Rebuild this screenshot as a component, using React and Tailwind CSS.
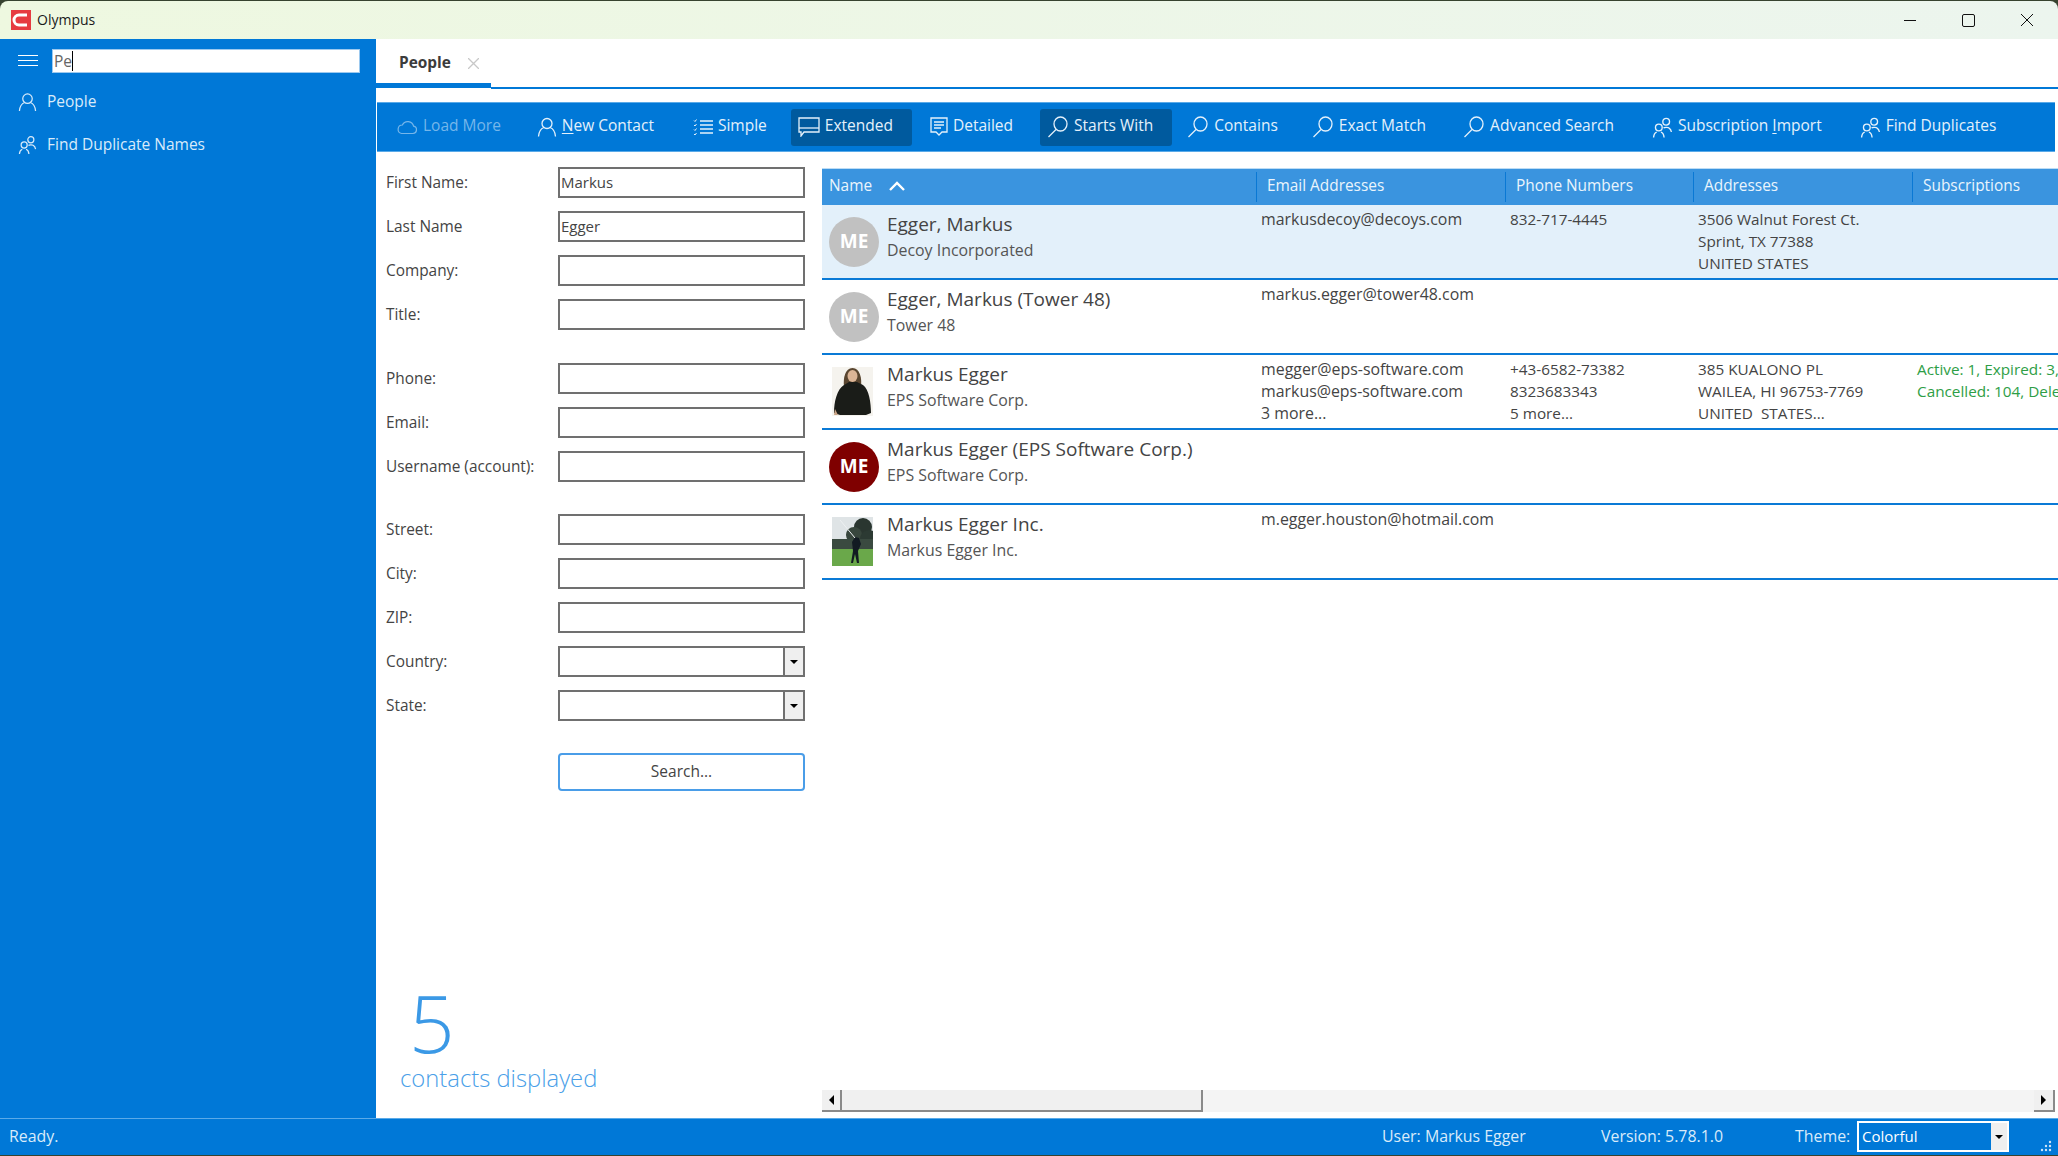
import React from "react";

const PersonIcon = ({ className }) => (
  <svg viewBox="0 0 20 20" fill="none" stroke="currentColor" strokeWidth="1.3" className={className}>
    <circle cx="10" cy="6.5" r="5" />
    <path d="M1.5 19.5c.4-5 3.2-8.2 5.5-9M18.5 19.5c-.4-5-3.2-8.2-5.5-9" />
  </svg>
);

const DuoIcon = ({ className }) => (
  <svg viewBox="0 0 20 20" fill="none" stroke="currentColor" strokeWidth="1.3" className={className}>
    <circle cx="13.5" cy="4.5" r="3.2" />
    <path d="M11 10.5c.8-.8 4-.9 5-.2 1.4.9 2.3 2.5 2.5 4" />
    <circle cx="6.5" cy="10" r="3.2" />
    <path d="M1.5 19.5c.2-2.3 1.2-4.4 3-5M11.5 19.5c-.2-2.3-1.2-4.4-3-5" />
  </svg>
);

const SearchIcon = ({ className }) => (
  <svg viewBox="0 0 22 22" fill="none" stroke="currentColor" strokeWidth="1.3" className={className}>
    <ellipse cx="13.5" cy="8" rx="6.5" ry="7" />
    <path d="M9 13.5 1.5 21" />
  </svg>
);

const CloudIcon = ({ className }) => (
  <svg viewBox="0 0 22 16" fill="none" stroke="currentColor" strokeWidth="1.2" className={className}>
    <path d="M5.5 14.5h11.5a3.7 3.7 0 0 0 .6-7.3A6 6 0 0 0 6.4 6 4.3 4.3 0 0 0 5.5 14.5Z" />
  </svg>
);

const ListIcon = ({ className }) => (
  <svg viewBox="0 0 20 18" fill="none" stroke="currentColor" strokeWidth="1.4" className={className}>
    <path d="M7 3h13M7 7h13M7 11h13M7 15h13" />
    <path d="M1 2.5l1 1 1.5-2M1 7l1 1 1.5-2M1 11.5l1 1 1.5-2M1 16l1 1 1.5-2" strokeWidth="1" />
  </svg>
);

const BubbleIcon = ({ className }) => (
  <svg viewBox="0 0 22 20" fill="none" stroke="currentColor" strokeWidth="1.3" className={className}>
    <path d="M1 1h20v14H6l-3 4v-4H1Z" />
    <path d="M1 11h20" />
  </svg>
);

const DocIcon = ({ className }) => (
  <svg viewBox="0 0 18 20" fill="none" stroke="currentColor" strokeWidth="1.3" className={className}>
    <path d="M1 1h16v14h-5l-3 3-3-3H1Z" />
    <path d="M4 5h10M4 8h10M4 11h7" />
  </svg>
);

const toolbar = [
  { icon: CloudIcon, size: "w-[22px] h-4", label: "Load More", disabled: true, space: "" },
  { icon: PersonIcon, size: "w-5 h-5", label: "New Contact", mark: 0, space: "ml-[10px]" },
  { icon: ListIcon, size: "w-5 h-[18px]", label: "Simple", space: "ml-[13px]" },
  { icon: BubbleIcon, size: "w-[22px] h-5", label: "Extended", active: true, space: "ml-[5px]" },
  { icon: DocIcon, size: "w-[18px] h-5", label: "Detailed", space: "ml-[11px]" },
  { icon: SearchIcon, size: "w-[22px] h-[22px]", label: "Starts With", active: true, space: "ml-[8px]" },
  { icon: SearchIcon, size: "w-[22px] h-[22px]", label: "Contains", space: "ml-[8px]" },
  { icon: SearchIcon, size: "w-[22px] h-[22px]", label: "Exact Match", space: "ml-[8px]" },
  { icon: SearchIcon, size: "w-[22px] h-[22px]", label: "Advanced Search", space: "ml-[11px]" },
  { icon: DuoIcon, size: "w-[21px] h-[21px]", label: "Subscription Import", mark: 13, space: "ml-[12px]" },
  { icon: DuoIcon, size: "w-[21px] h-[21px]", label: "Find Duplicates", space: "ml-[12px]" },
];

const WomanPhoto = () => (
  <svg viewBox="0 0 41 49" className="w-[41px] h-[49px]">
    <rect width="41" height="49" fill="#f5f3ee" />
    <path d="M12 20c-1-9 1-19 8.500-19S30 11 29 20Z" fill="#5a4630" />
    <ellipse cx="20.500" cy="9" rx="5" ry="6" fill="#dcb596" />
    <path d="M2 46C2 35 5 22 12 18l5-3h8l6 3c6 4 8 18 8 28l-5 2H8Z" fill="#1a1c18" />
    <path d="M2 48l1-6 3 6Z" fill="#caa487" />
  </svg>
);

const GolferPhoto = () => (
  <svg viewBox="0 0 41 49" className="w-[41px] h-[49px]">
    <rect width="41" height="49" fill="#dfe4e6" />
    <circle cx="31" cy="10" r="9" fill="#2a3630" />
    <circle cx="22" cy="18" r="8" fill="#38463d" />
    <circle cx="37" cy="22" r="9" fill="#2c3a33" />
    <rect y="22" width="41" height="11" fill="#3a4a40" />
    <rect y="32" width="41" height="17" fill="#6aa84a" />
    <path d="M19 46l2-12-1-9 3-5 4 1 2 6-3 7 1 12h-2l-2-9-2 9Z" fill="#121a22" />
    <path d="M23 21 8 3" stroke="#eef1f2" strokeWidth="1" />
  </svg>
);

const contacts = [
  {
    name: "Egger, Markus", company: "Decoy Incorporated", avatar: "grey", selected: true,
    emails: ["markusdecoy@decoys.com"], phones: ["832-717-4445"],
    addresses: ["3506 Walnut Forest Ct.", "Sprint, TX 77388", "UNITED STATES"],
  },
  {
    name: "Egger, Markus (Tower 48)", company: "Tower 48", avatar: "grey",
    emails: ["markus.egger@tower48.com"], phones: [], addresses: [],
  },
  {
    name: "Markus Egger", company: "EPS Software Corp.", avatar: "woman",
    emails: ["megger@eps-software.com", "markus@eps-software.com", "3 more..."],
    phones: ["+43-6582-73382", "8323683343", "5 more..."],
    addresses: ["385 KUALONO PL", "WAILEA, HI 96753-7769", "UNITED  STATES..."],
    subs: ["Active: 1, Expired: 3, Pending: 0", "Cancelled: 104, Deleted: 0"],
  },
  {
    name: "Markus Egger (EPS Software Corp.)", company: "EPS Software Corp.", avatar: "red",
    emails: [], phones: [], addresses: [],
  },
  {
    name: "Markus Egger Inc.", company: "Markus Egger Inc.", avatar: "golfer",
    emails: ["m.egger.houston@hotmail.com"], phones: [], addresses: [],
  },
];

const Avatar = ({ kind }) => {
  if (kind === "woman") return <div className="pl-[3px] w-[50px] shrink-0"><WomanPhoto /></div>;
  if (kind === "golfer") return <div className="pl-[3px] w-[50px] shrink-0"><GolferPhoto /></div>;
  return (
    <div
      className={`w-[50px] h-[50px] shrink-0 rounded-full flex items-center justify-center text-white font-bold text-[19px] ${
        kind === "red" ? "bg-[#7f0000]" : "bg-[#c1c1c1]"
      }`}
    >
      ME
    </div>
  );
};

const Cell = ({ lines, className = "text-[#444] text-[15.3px]" }) => (
  <div className={`pt-[3px] pl-[5px] leading-[22px] whitespace-pre overflow-hidden ${className}`}>
    {lines.map((l) => (
      <div key={l}>{l}</div>
    ))}
  </div>
);

const Field = ({ label, value, combo, className = "" }) => (
  <div className={`flex items-center h-[31px] ${className}`}>
    <label className="w-[172px] text-[15.4px] text-[#444]">{label}</label>
    {combo ? (
      <div className="w-[247px] h-[31px] border-2 border-[#707070] flex bg-white">
        <div className="flex-1" />
        <div className="w-[20px] bg-[#efefef] border-l-2 border-[#707070] flex items-center justify-center">
          <span className="w-0 h-0 border-x-[4px] border-x-transparent border-t-[4px] border-t-black" />
        </div>
      </div>
    ) : (
      <div className="w-[247px] h-[31px] border-2 border-[#707070] bg-white pl-px text-[15px] leading-[26px] text-[#444]">
        {value}
      </div>
    )}
  </div>
);

const Underlined = ({ text, mark }) =>
  mark === undefined ? (
    text
  ) : (
    <>
      {text.slice(0, mark)}
      <span className="underline underline-offset-2">{text[mark]}</span>
      {text.slice(mark + 1)}
    </>
  );

const App = () => {
  return (
    <div
      className="h-screen w-full bg-[#37432f] pt-px flex flex-col overflow-hidden text-[#444]"
      style={{ fontFamily: '"Open Sans", "Noto Sans", sans-serif' }}
    >
      {/* title bar */}
      <div className="h-[38px] shrink-0 rounded-tl-lg rounded-tr-lg bg-gradient-to-r from-[#eef8e0] to-[#ecf5ee] flex items-center pl-[11px]">
        <svg viewBox="0 0 20 20" className="w-5 h-5">
          <rect width="20" height="20" fill="#e63b41" />
          <path d="M16 5H8a5 5 0 0 0 0 10h8" fill="none" stroke="#fff" strokeWidth="3" />
        </svg>
        <span className="ml-[6px] pb-px text-[14px] text-[#1a1a1a]">Olympus</span>
        <div className="ml-auto flex items-center gap-[46px] pr-[25px] text-[#1a1a1a]">
          <span className="w-3 h-px bg-[#111]" />
          <span className="w-[13px] h-[13px] border border-[#111] rounded-[2px]" />
          <svg viewBox="0 0 12 12" className="w-3 h-3" stroke="#111" strokeWidth="1">
            <path d="M0 0l12 12M12 0 0 12" />
          </svg>
        </div>
      </div>

      <div className="flex-1 flex min-h-0 bg-white">
        {/* sidebar */}
        <div className="w-[376px] shrink-0 bg-[#0078d7] text-[#d9ebfa]">
          <div className="flex items-center h-[33px] mt-[5px] pl-[18px]">
            <div className="w-[20px] flex flex-col gap-[4px]">
              <span className="h-px bg-white" />
              <span className="h-px bg-white" />
              <span className="h-px bg-white" />
            </div>
            <div className="ml-[14px] w-[308px] h-[24px] bg-white border border-[#9cc9ef] pl-px text-[15.5px] leading-[22px] text-[#666] flex items-center">
              Pe<span className="w-px h-[20px] bg-black" />
            </div>
          </div>
          <div className="flex items-center gap-[10px] pl-[18px] mt-[10px] h-[30px] text-[15.5px]">
            <PersonIcon className="w-[19px] h-5" />
            People
          </div>
          <div className="flex items-center gap-[10px] pl-[18px] mt-[13px] h-[30px] text-[15.5px]">
            <DuoIcon className="w-[19px] h-5" />
            Find Duplicate Names
          </div>
        </div>

        {/* main */}
        <div className="flex-1 min-w-0 flex flex-col">
          <div className="h-[50px] shrink-0 flex">
            <div className="w-[115px] h-[49px] pt-[4px] border-b-[5px] border-[#0078d7] flex items-center pl-[23px]">
              <span className="text-[15.4px] font-bold text-[#3c3c3c]">People</span>
              <svg viewBox="0 0 11 11" className="w-[11px] h-[11px] ml-[17px]" stroke="#c8c8c8" strokeWidth="1.3">
                <path d="M0 0l11 11M11 0 0 11" />
              </svg>
            </div>
            <div className="flex-1 h-[50px] border-b-2 border-[#0078d7]" />
          </div>

          {/* toolbar */}
          <div className="mt-[13px] ml-px mr-[3px] h-[50px] shrink-0 bg-[#0078d7] border-y border-[#5aaae8] flex items-center pl-[12px] text-[#e4f1fb]">
            {toolbar.map(({ icon: Icon, size, label, disabled, active, mark, space }) => (
              <div
                key={label}
                className={`h-[37px] pl-[7px] pr-[19px] flex items-center gap-[5px] rounded-[3px] text-[15.5px] whitespace-nowrap ${space} ${
                  active ? "bg-[#005a9e]" : ""
                } ${disabled ? "text-[#75b6ea]" : ""}`}
              >
                <Icon className={size} />
                <span className="pb-[2px]">
                  <Underlined text={label} mark={mark} />
                </span>
              </div>
            ))}
          </div>

          <div className="flex-1 min-h-0 flex">
            {/* search form */}
            <div className="w-[446px] shrink-0 flex flex-col pl-[10px] pt-[15px]">
              <Field label="First Name:" value="Markus" />
              <Field label="Last Name" value="Egger" className="mt-[13px]" />
              <Field label="Company:" className="mt-[13px]" />
              <Field label="Title:" className="mt-[13px]" />
              <Field label="Phone:" className="mt-[33px]" />
              <Field label="Email:" className="mt-[13px]" />
              <Field label="Username (account):" className="mt-[13px]" />
              <Field label="Street:" className="mt-[32px]" />
              <Field label="City:" className="mt-[13px]" />
              <Field label="ZIP:" className="mt-[13px]" />
              <Field label="Country:" combo className="mt-[13px]" />
              <Field label="State:" combo className="mt-[13px]" />
              <button className="ml-[172px] mt-[32px] w-[247px] h-[38px] rounded-[4px] border-2 border-[#4a9de8] bg-white text-[15.5px] text-[#444]">
                Search...
              </button>
              <div className="mt-auto pl-[14px] pb-[24px] text-[#3b99e6] font-light">
                <div className="pl-[9px] text-[80px] leading-[80px]">5</div>
                <div className="text-[23.8px] leading-[32px] text-[#4aa0e8]">contacts displayed</div>
              </div>
            </div>

            {/* results */}
            <div className="flex-1 min-w-0 flex flex-col pt-[16px]">
              <div className="h-[37px] shrink-0 bg-[#3a94df] border-t border-[#bcdcf5] grid grid-cols-[434px_249px_188px_219px_146px] text-[15.4px] text-[#eaf4fc]">
                <div className="pl-[7px] pb-[2px] flex items-center gap-[17px] whitespace-nowrap">
                  Name
                  <svg viewBox="0 0 16 10" className="w-4 h-[10px]" fill="none" stroke="#fff" strokeWidth="2.4">
                    <path d="M1 9l7-7 7 7" />
                  </svg>
                </div>
                {["Email Addresses", "Phone Numbers", "Addresses", "Subscriptions"].map((h) => (
                  <div key={h} className="my-[3px] border-l border-[#0a78d4] pl-[10px] pb-[2px] flex items-center whitespace-nowrap overflow-hidden">
                    {h}
                  </div>
                ))}
              </div>

              <div className="flex-1 min-h-0">
                {contacts.map((c) => (
                  <div
                    key={c.name}
                    className={`h-[75px] border-b-2 border-[#0a7ad6] grid grid-cols-[434px_249px_188px_219px_146px] ${
                      c.selected ? "bg-[#e3f0fa]" : ""
                    }`}
                  >
                    <div className="flex items-center pl-[7px] gap-[8px] whitespace-nowrap">
                      <Avatar kind={c.avatar} />
                      <div className="mb-[9px]">
                        <div className="text-[19px] leading-[26px] text-[#444]">{c.name}</div>
                        <div className="text-[15.9px] leading-[26px] text-[#555]">{c.company}</div>
                      </div>
                    </div>
                    <Cell lines={c.emails} className="text-[#444] text-[15.9px]" />
                    <Cell lines={c.phones} />
                    <Cell lines={c.addresses} />
                    <Cell lines={c.subs || []} className="text-[#2e9e46] text-[15.3px]" />
                  </div>
                ))}
              </div>

              {/* horizontal scrollbar */}
              <div className="h-[22px] shrink-0 mb-[6px] mr-[3px] bg-[#f4f4f4] flex">
                <div className="w-[20px] bg-[#f0f0f0] border-r-2 border-b-2 border-[#8a8a8a] flex items-center justify-center">
                  <span className="w-0 h-0 border-y-[5px] border-y-transparent border-r-[5px] border-r-black" />
                </div>
                <div className="w-[361px] bg-[#f0f0f0] border-r-2 border-b-2 border-[#8a8a8a]" />
                <div className="flex-1" />
                <div className="w-[21px] bg-[#f0f0f0] border-r-2 border-b-2 border-[#8a8a8a] flex items-center justify-center">
                  <span className="w-0 h-0 border-y-[5px] border-y-transparent border-l-[5px] border-l-black" />
                </div>
              </div>
            </div>
          </div>
        </div>
      </div>

      {/* status bar */}
      <div className="h-[38px] shrink-0 bg-[#0078d7] border-t border-[#5aaae8] border-b border-b-[#37432f] flex items-center pl-[9px] pb-px text-[15.9px] text-[#d9ebfa] relative">
        <span>Ready.</span>
        <span className="ml-auto w-[219px]">User: Markus Egger</span>
        <span className="w-[194px]">Version: 5.78.1.0</span>
        <span className="w-[62px]">Theme:</span>
        <div className="w-[152px] h-[31px] border-2 border-white flex mr-[49px]">
          <div className="flex-1 pl-[3px] text-[15px] leading-[26px] text-white">Colorful</div>
          <div className="w-[16px] bg-[#efefef] flex items-center justify-center">
            <span className="w-0 h-0 border-x-[4px] border-x-transparent border-t-[4px] border-t-black" />
          </div>
        </div>
        <svg viewBox="0 0 12 12" className="absolute right-[6px] bottom-[3px] w-3 h-3" fill="#cfe5f8">
          <circle cx="10" cy="2" r="1.2" />
          <circle cx="6" cy="6" r="1.2" />
          <circle cx="10" cy="6" r="1.2" />
          <circle cx="2" cy="10" r="1.2" />
          <circle cx="6" cy="10" r="1.2" />
          <circle cx="10" cy="10" r="1.2" />
        </svg>
      </div>
    </div>
  );
};

export default App;
